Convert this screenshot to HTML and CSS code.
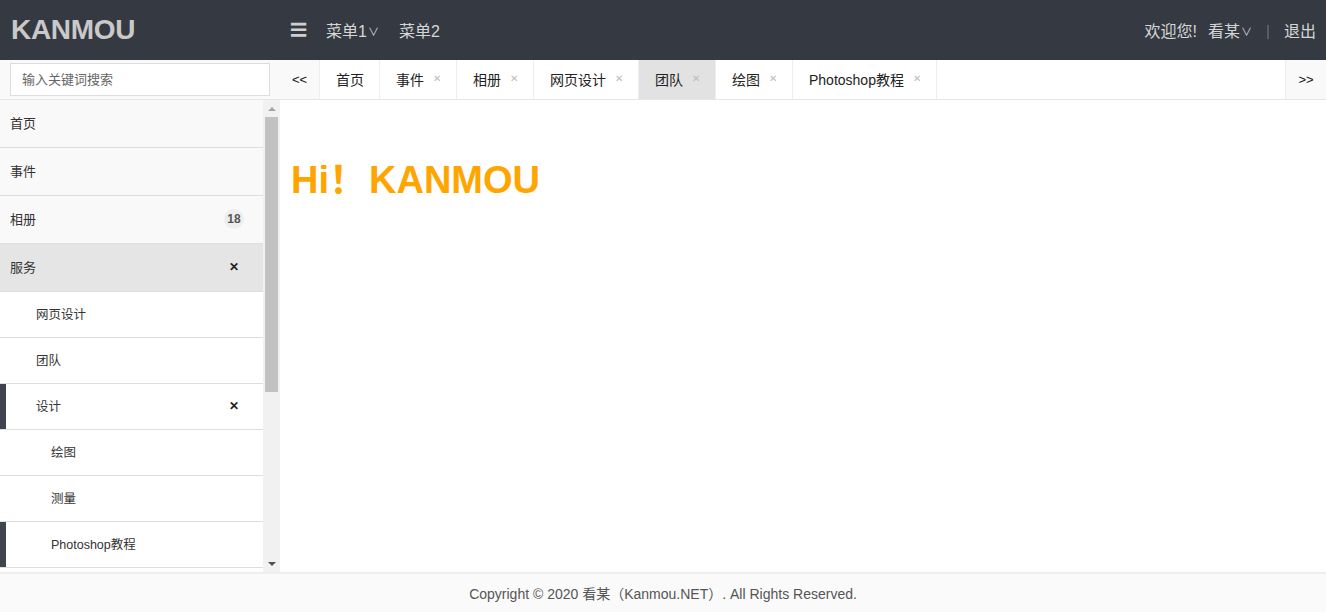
FILE: index.html
```html
<!DOCTYPE html>
<html lang="zh">
<head>
<meta charset="utf-8">
<title>KANMOU</title>
<link rel="stylesheet" href="styles.css">
</head>
<body>
<header class="topbar">
  <div class="logo">KANMOU</div>
  <nav class="menu">
    <span class="burger">☰</span>
    <span class="menu-item">菜单1<span class="caret">∨</span></span>
    <span class="menu-item">菜单2</span>
  </nav>
  <div class="user">
    <span>欢迎您!</span>
    <span class="uname">看某<span class="caret">∨</span></span>
    <span class="sep">|</span>
    <span>退出</span>
  </div>
</header>
<div class="main">
  <aside class="left">
    <div class="search"><input class="search-input" type="text" placeholder="输入关键词搜索"></div>
    <div class="side-wrap">
      <ul class="side">
        <li class="item lvl1">首页</li>
        <li class="item lvl1">事件</li>
        <li class="item lvl1">相册<span class="badge">18</span></li>
        <li class="item lvl1 open">服务<span class="x">✕</span></li>
        <li class="item lvl2">网页设计</li>
        <li class="item lvl2">团队</li>
        <li class="item lvl2 marked">设计<span class="x">✕</span></li>
        <li class="item lvl3">绘图</li>
        <li class="item lvl3">测量</li>
        <li class="item lvl3 marked">Photoshop教程</li>
      </ul>
      <div class="vscroll">
        <div class="arrow up"></div>
        <div class="track"><div class="thumb"></div></div>
        <div class="arrow down"></div>
      </div>
    </div>
  </aside>
  <section class="right">
    <div class="tabbar">
      <span class="nav-btn">&lt;&lt;</span>
      <div class="tabs">
        <span class="tab">首页</span>
        <span class="tab">事件<span class="tx">✕</span></span>
        <span class="tab">相册<span class="tx">✕</span></span>
        <span class="tab">网页设计<span class="tx">✕</span></span>
        <span class="tab active">团队<span class="tx">✕</span></span>
        <span class="tab">绘图<span class="tx">✕</span></span>
        <span class="tab">Photoshop教程<span class="tx">✕</span></span>
      </div>
      <span class="nav-btn nav-right">&gt;&gt;</span>
    </div>
    <div class="content">
      <h1 class="hello">Hi<span class="bang">！</span>KANMOU</h1>
    </div>
  </section>
</div>
<footer class="footer">Copyright © 2020 看某（Kanmou.NET）. All Rights Reserved.</footer>
</body>
</html>
```

FILE: styles.css
```css
* { box-sizing: border-box; }
html, body { margin: 0; padding: 0; }
body {
  width: 1326px;
  height: 612px;
  overflow: hidden;
  font-family: "Liberation Sans", Arial, "Noto Sans CJK SC", sans-serif;
  color: #333;
  display: flex;
  flex-direction: column;
  background: #fff;
}
.topbar {
  height: 60px;
  flex: none;
  background: #353a42;
  display: flex;
  align-items: center;
  color: #d6d6d6;
  font-size: 16px;
}
.logo {
  width: 290px;
  padding-left: 11px;
  font-size: 28px;
  font-weight: bold;
  color: #c9c9c9;
  letter-spacing: -0.3px;
}
.menu {
  display: flex;
  align-items: center;
  gap: 20px;
  flex: 1;
}
.burger { font-size: 17px; color: #cfcfcf; width: 16px; font-weight: normal; }
.caret { font-size: 11px; margin-left: 1px; position: relative; top: -1px; }
.user {
  display: flex;
  align-items: center;
  padding-right: 10px;
  gap: 11px;
}
.sep { color: #6b6f77; margin: 0 3px; font-size: 15px; }

.main {
  flex: 1;
  display: flex;
  min-height: 0;
}
.left {
  width: 280px;
  flex: none;
  display: flex;
  flex-direction: column;
  min-height: 0;
}
.search {
  height: 40px;
  flex: none;
  background: #f9f9f9;
  border-bottom: 1px solid #e6e6e6;
  padding: 3px 10px 0 10px;
}
.search-input {
  width: 260px;
  height: 33px;
  border: 1px solid #ddd;
  background: #fff;
  padding: 0 11px;
  font-size: 13px;
  font-family: inherit;
  outline: none;
}
.search-input::placeholder { color: #666; }
.side-wrap {
  flex: 1;
  display: flex;
  min-height: 0;
}
.side {
  list-style: none;
  margin: 0;
  padding: 0;
  width: 263px;
  flex: none;
  overflow: hidden;
  background: #fff;
}
.item {
  display: flex;
  align-items: center;
  border-bottom: 1px solid #dedede;
  font-size: 13px;
  color: #333;
}
.lvl1 { height: 48px; padding: 0 20px 2px 10px; background: #f9f9f9; }
.lvl1.open { background: #e5e5e5; }
.lvl2 { height: 46px; padding: 0 20px 2px 36px; background: #fff; font-size: 12.5px; }
.lvl3 { height: 46px; padding: 0 20px 2px 51px; background: #fff; font-size: 12.5px; }
.marked { box-shadow: inset 6px 0 0 #3f4450; }
.badge {
  margin-left: auto;
  width: 20px;
  height: 20px;
  border-radius: 50%;
  background: #eee;
  color: #555;
  font-size: 12px;
  font-weight: bold;
  display: flex;
  align-items: center;
  justify-content: center;
  margin-right: -1px;
}
.x {
  margin-left: auto;
  font-size: 12px;
  font-weight: bold;
  color: #222;
  margin-right: 4px;
}
.vscroll {
  width: 17px;
  flex: none;
  background: #f1f1f1;
  display: flex;
  flex-direction: column;
}
.arrow {
  height: 17px;
  flex: none;
  display: flex;
  align-items: center;
  justify-content: center;
}
.arrow::before {
  content: "";
  width: 0;
  height: 0;
  border-left: 4px solid transparent;
  border-right: 4px solid transparent;
}
.arrow.up::before { border-bottom: 4px solid #a3a3a3; }
.arrow.down::before { border-top: 4px solid #505050; }
.track { flex: 1; padding: 0 2px; }
.thumb { height: 275px; background: #c1c1c1; }

.right {
  flex: 1;
  display: flex;
  flex-direction: column;
  min-width: 0;
}
.tabbar {
  height: 40px;
  flex: none;
  display: flex;
  border-bottom: 1px solid #e6e6e6;
  font-size: 14px;
  color: #222;
}
.nav-btn {
  width: 40px;
  flex: none;
  display: flex;
  align-items: center;
  justify-content: center;
  background: #f9f9f9;
  border-right: 1px solid #eee;
  font-size: 13px;
  color: #111;
  padding-bottom: 1px;
}
.nav-right { border-right: none; border-left: 1px solid #eee; width: 41px; }
.tabs { flex: 1; display: flex; }
.tab {
  display: flex;
  align-items: center;
  padding: 0 15px 2px 16px;
  border-right: 1px solid #eee;
  white-space: nowrap;
}
.tab.active { background: #e2e2e2; }
.tx {
  font-size: 10px;
  color: #bbb;
  margin-left: 9px;
}
.content { flex: 1; padding: 0 11px; }
.hello {
  margin: 58px 0 0 0;
  font-size: 38px;
  font-weight: bold;
  color: #ffa500;
  line-height: 45px;
  display: flex;
  align-items: baseline;
}
.bang { margin-right: 2px; }
.footer {
  height: 40px;
  flex: none;
  border-top: 2px solid #eee;
  background: #fafafa;
  color: #555;
  font-size: 14px;
  display: flex;
  align-items: center;
  justify-content: center;
}
```
